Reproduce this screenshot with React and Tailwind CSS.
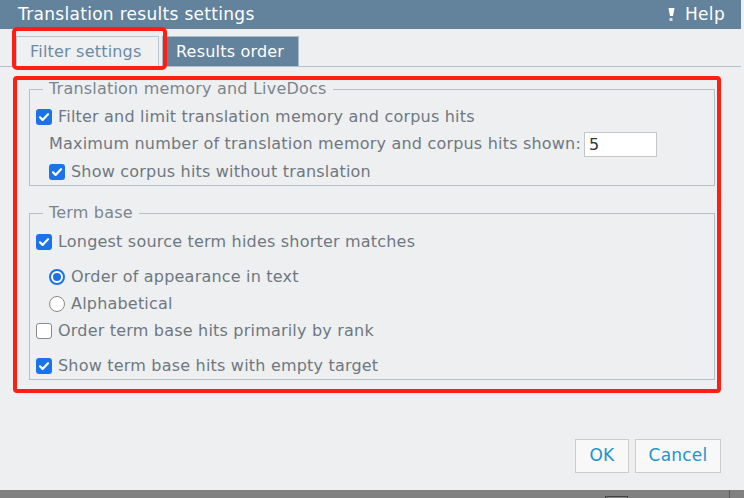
import { useState } from "react";

function Check({ checked }) {
  return checked ? (
    <span className="w-[16px] h-[16px] rounded-[3px] bg-[#1a73e8] flex items-center justify-center shrink-0">
      <svg width="12" height="12" viewBox="0 0 12 12">
        <path d="M2 6.3l2.6 2.6L10 3.2" fill="none" stroke="#fff" strokeWidth="2.2" strokeLinecap="round" strokeLinejoin="round" />
      </svg>
    </span>
  ) : (
    <span className="w-[16px] h-[16px] rounded-[3px] border border-[#8a8a8a] bg-white shrink-0" />
  );
}

function Radio({ checked }) {
  return checked ? (
    <span className="w-[16px] h-[16px] rounded-full border-2 border-[#1a73e8] bg-white flex items-center justify-center shrink-0">
      <span className="w-[8px] h-[8px] rounded-full bg-[#1a73e8]" />
    </span>
  ) : (
    <span className="w-[16px] h-[16px] rounded-full border border-[#8a8a8a] bg-white shrink-0" />
  );
}

export default function App() {
  const [maxHits, setMaxHits] = useState("5");

  return (
    <div className="relative w-[744px] h-[498px] bg-[#eeeff1] overflow-hidden flex flex-col font-['DejaVu_Sans',sans-serif] text-[16px] tracking-[0.2px] text-[#6e7880]">
      {/* Title bar */}
      <div className="w-[741px] h-[29px] shrink-0 bg-[#63829c] flex items-center justify-between pl-[18px] pr-[16px] text-white">
        <span className="text-[17px] tracking-[0.3px]">Translation results settings</span>
        <span className="flex items-center gap-[10px] text-[17px] tracking-[0.3px]">
          <svg width="7" height="13" viewBox="0 0 7 13">
            <path d="M0.5 0h6l-1.5 8h-3z" fill="#fff" />
            <rect x="1.5" y="10" width="3" height="3" fill="#d8dee4" />
          </svg>
          Help
        </span>
      </div>

      {/* Tabs */}
      <div className="w-[741px] mt-[7px] flex items-end gap-[3px] pl-[16px] border-b border-[#b0bfcb]">
        <div className="w-[143px] h-[30px] border border-b-0 border-[#b8c6d1] bg-[#eef0f2] flex items-center pl-[13px] text-[#6c8aa3]">
          Filter settings
        </div>
        <div className="w-[137px] h-[30px] border border-b-0 border-[#a9bccb] bg-[#63829c] flex items-center pl-[13px] text-white">
          Results order
        </div>
      </div>

      {/* Groups */}
      <div className="pl-[29px] w-[715px] mt-[12px]">
        <fieldset className="border border-[#b4c0ca] px-[6px] pt-[5px]">
          <legend className="ml-[7px] px-[6px] leading-[20px] text-[#7a868f]">Translation memory and LiveDocs</legend>
          <div className="h-[26px] flex items-center gap-[6px]">
            <Check checked />
            <span>Filter and limit translation memory and corpus hits</span>
          </div>
          <div className="h-[28px] flex items-center gap-[3px] pl-[13px]">
            <span>Maximum number of translation memory and corpus hits shown:</span>
            <input
              value={maxHits}
              onChange={(e) => setMaxHits(e.target.value)}
              className="w-[73px] h-[25px] bg-white border border-[#c6c6c6] pl-[4px] text-[16px] text-[#333] outline-none"
            />
          </div>
          <div className="h-[27px] flex items-center gap-[6px] pl-[13px]">
            <Check checked />
            <span>Show corpus hits without translation</span>
          </div>
        </fieldset>

        <fieldset className="mt-[17px] border border-[#b4c0ca] px-[6px] pt-[6px]">
          <legend className="ml-[7px] px-[6px] leading-[20px] text-[#7a868f]">Term base</legend>
          <div className="h-[26px] flex items-center gap-[6px]">
            <Check checked />
            <span>Longest source term hides shorter matches</span>
          </div>
          <div className="mt-[9px] h-[26px] flex items-center gap-[6px] pl-[13px]">
            <Radio checked />
            <span>Order of appearance in text</span>
          </div>
          <div className="mt-[1px] h-[26px] flex items-center gap-[6px] pl-[13px]">
            <Radio />
            <span>Alphabetical</span>
          </div>
          <div className="mt-[1px] h-[26px] flex items-center gap-[6px]">
            <Check />
            <span>Order term base hits primarily by rank</span>
          </div>
          <div className="mt-[9px] h-[26px] flex items-center gap-[6px]">
            <Check checked />
            <span>Show term base hits with empty target</span>
          </div>
        </fieldset>
      </div>

      {/* Buttons */}
      <div className="mt-auto mb-[17px] flex justify-end gap-[6px] pr-[23px]">
        <button className="w-[54px] h-[34px] bg-[#f8f8f8] border border-[#cccccc] text-[#2593c9] text-[17px]">OK</button>
        <button className="w-[86px] h-[34px] bg-[#f8f8f8] border border-[#cccccc] text-[#2593c9] text-[17px]">Cancel</button>
      </div>

      {/* Taskbar strip */}
      <div className="h-[8px] shrink-0 bg-[#808080] flex items-end">
        <div className="ml-[605px] w-[23px] h-[2px] border-t border-x border-[#444]" />
        <div className="ml-[101px] w-px h-[8px] bg-[#5a5a5a]" />
      </div>

      {/* Red annotation frames */}
      <div className="absolute left-[12px] top-[27px] w-[155px] h-[43px] border-4 border-[#ff1e12] rounded-[5px]" />
      <div className="absolute left-[13px] top-[76px] w-[708px] h-[317px] border-4 border-[#ff1e12] rounded-[4px]" />
    </div>
  );
}
